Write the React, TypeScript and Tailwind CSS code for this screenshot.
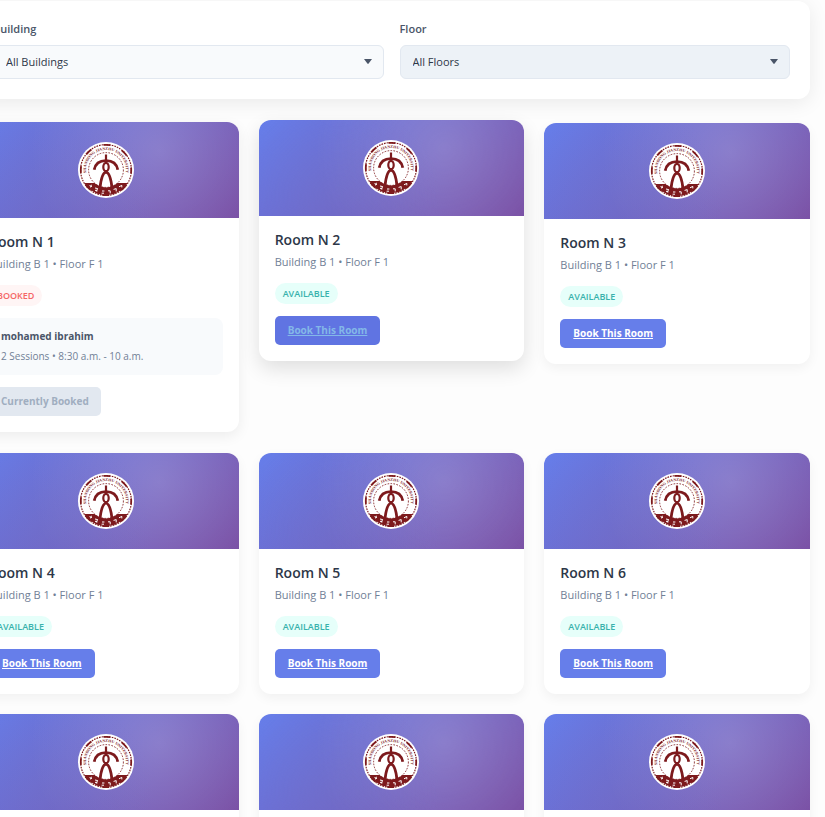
import { useState } from "react";

interface Room {
  id: number;
  name: string;
  building: string;
  floor: string;
  bookedBy?: string;
  slot?: string;
  state?: "hovered" | "leaving";
}

const rooms: Room[] = [
  {
    id: 1,
    name: "Room N 1",
    building: "Building B 1",
    floor: "Floor F 1",
    bookedBy: "mohamed ibrahim",
    slot: "2 Sessions • 8:30 a.m. - 10 a.m.",
    state: "leaving",
  },
  { id: 2, name: "Room N 2", building: "Building B 1", floor: "Floor F 1", state: "hovered" },
  { id: 3, name: "Room N 3", building: "Building B 1", floor: "Floor F 1" },
  { id: 4, name: "Room N 4", building: "Building B 1", floor: "Floor F 1" },
  { id: 5, name: "Room N 5", building: "Building B 1", floor: "Floor F 1" },
  { id: 6, name: "Room N 6", building: "Building B 1", floor: "Floor F 1" },
  { id: 7, name: "Room N 7", building: "Building B 1", floor: "Floor F 1" },
  { id: 8, name: "Room N 8", building: "Building B 1", floor: "Floor F 1" },
  { id: 9, name: "Room N 9", building: "Building B 1", floor: "Floor F 1" },
];

function Seal({ id }: { id: number }) {
  return (
    <svg viewBox="0 0 56 56" className="size-14" aria-hidden="true">
      <circle cx="28" cy="28" r="28" fill="#fff" />
      <circle cx="28" cy="28" r="25.4" fill="none" stroke="#7d1a1d" strokeWidth="1.2" strokeDasharray="1.6 1" />
      <circle cx="28" cy="28" r="25.2" fill="none" stroke="#7d1a1d" strokeWidth="1.8" strokeDasharray="7 12.8" strokeDashoffset="3.5" />

      {/* lower segment with the white marks */}
      <path d="M6.4 41H49.6A25.4 25.4 0 0 1 6.4 41Z" fill="#7d1a1d" />
      <path
        d="M11.5 43.6l2.4 1M13.4 42.8l-.8 2.6M17 46l2.6.6M17 48.2l2.4.8M19.6 46.4l-1.2 3M24 49h2.4M23.6 51.2h2.4M30 48.8h2.2v2.6M35.6 47.4l2.6-.8v2.8M41 44.8l2.8-1.4v2"
        fill="none"
        stroke="#fff"
        strokeWidth="1"
      />

      <circle cx="28" cy="28" r="17.4" fill="#fff" stroke="#7d1a1d" strokeWidth="0.9" strokeDasharray="1.6 1.4" />
      <path id={`seal-arc-${id}`} d="M12.3 40.3A20 20 0 1 1 43.7 40.3" fill="none" />
      <text fill="#7d1a1d" className="font-['Liberation_Serif',serif] text-[4px] font-bold">
        <textPath href={`#seal-arc-${id}`} startOffset="50%" textAnchor="middle">
          SHANDONG JIANZHU UNIVERSITY
        </textPath>
      </text>

      {/* figure */}
      <path d="M28 12.5V19" stroke="#7d1a1d" strokeWidth="2.2" />
      <path d="M16.2 27.8C17.4 21.2 22 18.6 28 18.6S38.6 21.2 39.8 27.8" fill="none" stroke="#7d1a1d" strokeWidth="2.8" />
      <ellipse cx="28" cy="25" rx="2.7" ry="4.2" fill="#fff" stroke="#7d1a1d" strokeWidth="2.2" />
      <path d="M22 46C22.8 38 24.2 31 28 30C31.8 31 33.2 38 34 46" fill="none" stroke="#7d1a1d" strokeWidth="2.8" />
    </svg>
  );
}

interface FilterProps {
  id: string;
  label: string;
  options: string[];
  active?: boolean;
}

function Filter({ id, label, options, active }: FilterProps) {
  const [value, setValue] = useState(options[0]);

  return (
    <div className="flex flex-col gap-2">
      <label htmlFor={id} className="text-[11px] leading-4 font-semibold text-[#4a5568]">
        {label}
      </label>
      <div className="relative">
        <select
          id={id}
          value={value}
          onChange={(e) => setValue(e.target.value)}
          className={`block h-[34px] w-full appearance-none rounded-md border border-[#e2e8f0] px-3 text-[11px] text-[#2d3748] ${
            active ? "bg-[#edf2f7]" : "bg-[#f8fafc]"
          }`}
        >
          {options.map((option) => (
            <option key={option}>{option}</option>
          ))}
        </select>
        <svg viewBox="0 0 8 5" className="pointer-events-none absolute top-[14px] right-3 h-[5px] w-2" aria-hidden="true">
          <path d="M0 0h8L4.6 4.6a.8.8 0 0 1-1.2 0Z" fill="#4a5568" />
        </svg>
      </div>
    </div>
  );
}

function RoomCard({ room }: { room: Room }) {
  const hovered = room.state === "hovered";
  const lift = hovered
    ? "-translate-y-[3px] shadow-[0_8px_20px_rgba(0,0,0,0.12)]"
    : room.state === "leaving"
      ? "-translate-y-px shadow-[0_4px_14px_rgba(0,0,0,0.07)]"
      : "shadow-[0_4px_12px_rgba(0,0,0,0.05)]";

  return (
    <article className={`overflow-hidden rounded-xl bg-white ${lift}`}>
      <div className="flex h-24 items-center justify-center bg-[radial-gradient(circle_at_30%_80%,rgba(120,119,198,0.3)_0%,transparent_50%),radial-gradient(circle_at_70%_30%,rgba(255,255,255,0.19)_0%,transparent_65%),linear-gradient(135deg,#667eea_0%,#764ba2_100%)]">
        <Seal id={room.id} />
      </div>
      <div className="flex flex-col items-start gap-3 p-4">
        <div className="flex flex-col gap-1">
          <h3 className="text-sm leading-4 font-semibold text-[#2d3748]">{room.name}</h3>
          <p className="text-[11px] leading-[19px] text-[#718096]">
            {room.building} • {room.floor}
          </p>
        </div>
        {room.bookedBy ? (
          <>
            <span className="rounded-full bg-[#fff5f5] px-2 text-[9px] leading-[21px] font-semibold text-[#f56565] uppercase">
              Booked
            </span>
            <div className="flex w-full flex-col gap-[3px] rounded-lg bg-[#f8fafc] px-3 py-2.5">
              <p className="text-[10px] leading-[17px] font-bold text-[#4a5568]">{room.bookedBy}</p>
              <p className="text-[10px] leading-[17px] text-[#718096]">{room.slot}</p>
            </div>
            <button disabled className="h-[29px] rounded-[5px] bg-[#e2e8f0] px-3 text-[10px] font-bold text-[#a0aec0]">
              Currently Booked
            </button>
          </>
        ) : (
          <>
            <span className="rounded-full bg-[#e6fffa] px-2 text-[9px] leading-[21px] font-semibold text-[#38b2ac] uppercase">
              Available
            </span>
            <a
              href={`#room-${room.id}`}
              className={`rounded-[5px] px-[13px] text-[10px] leading-[29px] font-bold underline ${
                hovered ? "bg-[#6074e2] text-[#83b8e8]" : "bg-[#667eea] text-white"
              }`}
            >
              Book This Room
            </a>
          </>
        )}
      </div>
    </article>
  );
}

export default function App() {
  return (
    <div className="h-screen overflow-hidden bg-[#fdfdfd] font-['Open_Sans','Noto_Sans',sans-serif]">
      <main className="mr-[15px] -ml-[27px] flex flex-col gap-6 pt-px">
        <section className="grid grid-cols-2 gap-4 rounded-xl bg-white p-5 shadow-[0_4px_20px_rgba(0,0,0,0.08)]">
          <Filter id="building" label="Building" options={["All Buildings", "Building B 1"]} />
          <Filter id="floor" label="Floor" options={["All Floors", "Floor F 1"]} active />
        </section>
        <section className="grid grid-cols-3 items-start gap-5">
          {rooms.map((room) => (
            <RoomCard key={room.id} room={room} />
          ))}
        </section>
      </main>
    </div>
  );
}
